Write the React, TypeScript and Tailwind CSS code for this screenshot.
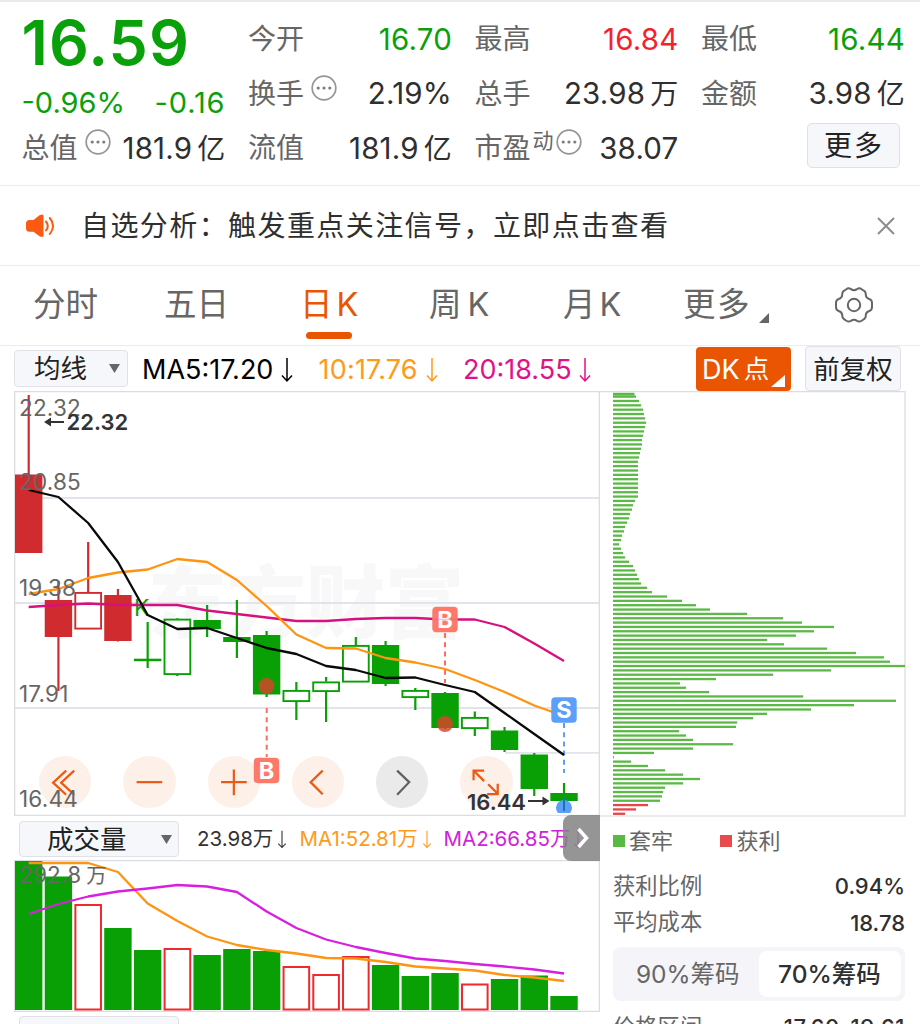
import type { ReactNode } from "react";

type Candle = {
  color: "red" | "green";
  hollow?: boolean;
  top: number;
  bottom: number;
  high: number;
  low: number;
};

const STEP = 29.74;
const FIRST_X = 28.7;

const CANDLES: Candle[] = [
  { color: "red", top: 474.5, bottom: 553, high: 395, low: 553 },
  { color: "red", top: 600, bottom: 637, high: 581, low: 691 },
  { color: "red", hollow: true, top: 592, bottom: 629.5, high: 542, low: 592 },
  { color: "red", top: 595, bottom: 641, high: 589, low: 641.5 },
  { color: "green", top: 658.7, bottom: 661.2, high: 622, low: 668 },
  { color: "green", hollow: true, top: 618.7, bottom: 675, high: 618, low: 676 },
  { color: "green", top: 620, bottom: 629, high: 605, low: 637 },
  { color: "green", top: 637, bottom: 642, high: 600, low: 658 },
  { color: "green", top: 635, bottom: 694.5, high: 631, low: 697 },
  { color: "green", hollow: true, top: 690, bottom: 702, high: 682, low: 720 },
  { color: "green", hollow: true, top: 681.5, bottom: 692, high: 677, low: 722 },
  { color: "green", hollow: true, top: 645, bottom: 682.5, high: 637, low: 682 },
  { color: "green", top: 645, bottom: 684, high: 641, low: 686 },
  { color: "green", hollow: true, top: 690, bottom: 698, high: 688, low: 710 },
  { color: "green", top: 693, bottom: 728, high: 692, low: 729 },
  { color: "green", hollow: true, top: 717, bottom: 729, high: 711.5, low: 736 },
  { color: "green", top: 730.5, bottom: 750, high: 727, low: 752 },
  { color: "green", top: 754.5, bottom: 789, high: 753, low: 796 },
  { color: "green", top: 793, bottom: 801, high: 783, low: 811 },
];

const MA5 = [490, 497, 523, 562, 615, 629, 628, 638, 648, 654, 666, 670, 678, 677.5, 685, 692, 713, 734, 755];
const MA10 = [594, 589, 578, 572.5, 569.5, 559, 562, 580, 606, 634.5, 648, 648.5, 658, 662.5, 669, 680, 692, 705.5, 716];
const MA20 = [607, 605, 603.5, 605, 605, 605, 610.5, 614, 617.5, 621, 621, 619, 618, 618, 619.5, 619.5, 627, 643.5, 661];

const VOLUMES = [861, 876.5, 904, 928, 950, 948, 955, 949, 951, 966, 974, 956, 965, 976, 973, 983.5, 979, 975.5, 996];
const RISING = [2, 5, 9, 10, 11, 15];
const VOL_MA1 = [863, 863, 863, 872, 903.5, 921, 936.5, 945, 950, 953.5, 958, 958.5, 962, 966.5, 968.5, 970.5, 975, 977.5, 981];
const VOL_MA2 = [914, 904, 896.5, 891.5, 888.5, 885, 886.5, 892, 911.5, 928, 939.5, 947, 953, 958.5, 961, 964, 966.5, 969.5, 973.5];

const CHIPS = [
  23, 26, 28, 30, 31, 32, 33, 32, 31, 30, 29, 29, 28, 27, 26, 25, 25, 25, 25, 25, 25, 25, 25, 25, 22, 20, 19, 17, 16,
  14, 12, 11, 9, 8, 6, 8, 10, 12, 16, 20, 22, 24, 26, 28, 34, 39, 54, 69, 83, 97, 134, 170, 189, 221, 201, 183, 154,
  171, 214, 243, 271, 277, 292, 218, 160, 103, 67, 73, 96, 190, 283, 241, 198, 154, 140, 124, 123, 66, 73, 80, 120, 80,
  41, 1, 18, 35, 52, 70, 87, 70, 52, 50, 49, 47, 35, 23, 12,
];
const PROFIT_FROM = 94;

const AXIS = [
  { label: "22.32", y: 416 },
  { label: "20.85", y: 490 },
  { label: "19.38", y: 595.5 },
  { label: "17.91", y: 701.5 },
  { label: "16.44", y: 806.5 },
];

const xAt = (i: number) => FIRST_X + i * STEP;
const toPoints = (ys: number[]) => ys.map((y, i) => `${xAt(i)},${y}`).join(" ");

function MoreDots() {
  return (
    <svg className="h-[26px] w-[26px] shrink-0" viewBox="0 0 26 26" fill="none">
      <circle cx="13" cy="13" r="11.8" stroke="#959595" strokeWidth="1.7" />
      <g fill="#7d7d7d">
        <circle cx="7.2" cy="13" r="1.6" />
        <circle cx="13" cy="13" r="1.6" />
        <circle cx="18.8" cy="13" r="1.6" />
      </g>
    </svg>
  );
}

function Cell({ label, value, extra, tone = "text-[#2f2f2f]" }: { label: string; value: ReactNode; extra?: ReactNode; tone?: string }) {
  return (
    <div className="flex h-[54.5px] items-center whitespace-nowrap">
      <span className="text-[28px] text-[#666]">{label}</span>
      {extra}
      <span className={`ml-auto text-[29.5px] tracking-[0.2px] ${tone}`}>{value}</span>
    </div>
  );
}

function Unit({ children }: { children: string }) {
  return <span className="ml-[5px] text-[28px]">{children}</span>;
}

function DownArrow({ className }: { className: string }) {
  return (
    <svg className={className} viewBox="0 0 12 26" fill="none" stroke="currentColor" strokeWidth="1.5">
      <path d="M6 1v23M1 18.500l5 5.500 5-5.500" />
    </svg>
  );
}

function Quote() {
  return (
    <section className="flex h-[184px] gap-[22.5px] border-b border-[#ececec] pl-[21.5px] pt-[10px]">
      <div className="w-[204px]">
        <div className="flex h-[61px] items-center text-[62.5px] font-semibold leading-none tracking-[1.1px] text-[#0aa00a]">
          16.59
        </div>
        <div className="flex h-[48px] items-center justify-between pt-[10px] text-[29px] text-[#0aa00a]">
          <span>-0.96%</span>
          <span className="tracking-[0.9px]">-0.16</span>
        </div>
        <Cell
          label="总值"
          extra={<span className="mb-3 ml-[7px]"><MoreDots /></span>}
          value={<>181.9<Unit>亿</Unit></>}
        />
      </div>
      <div className="w-[204px]">
        <Cell label="今开" value="16.70" tone="text-[#0aa00a]" />
        <Cell label="换手" value="2.19%" extra={<span className="mb-3 ml-[7px]"><MoreDots /></span>} />
        <Cell label="流值" value={<>181.9<Unit>亿</Unit></>} />
      </div>
      <div className="w-[204px]">
        <Cell label="最高" value="16.84" tone="text-[#f5222d]" />
        <Cell label="总手" value={<>23.98<Unit>万</Unit></>} />
        <Cell
          label="市盈"
          value="38.07"
          extra={
            <span className="mb-4 ml-[2px] flex items-center text-[21px] text-[#666]">
              动
              <span className="ml-[2px] mt-1"><MoreDots /></span>
            </span>
          }
        />
      </div>
      <div className="w-[204px]">
        <Cell label="最低" value="16.44" tone="text-[#0aa00a]" />
        <Cell label="金额" value={<>3.98<Unit>亿</Unit></>} />
        <button className="ml-auto mr-[5.5px] mt-[2px] flex h-[45px] w-[93px] items-center justify-center rounded-[5px] border-[1.5px] border-[#dfe1e6] bg-[#f6f7fb] pl-[2px] text-[28px] tracking-[2px] text-[#222]">
          更多
        </button>
      </div>
    </section>
  );
}

function Notice() {
  return (
    <section className="flex h-[80px] items-center border-b border-[#ececec] pl-[25px] pr-[25px]">
      <svg className="h-[26px] w-[31px]" viewBox="0 0 31 26" fill="none">
        <path d="M4.500 7h4L14.500 2.300Q18.500 .2 18.500 3v19.500q0 2.500-4 .8L8.500 18.800h-4Q1 18.800 1 15.300V10.500Q1 7 4.500 7Z" fill="#fc5a12" />
        <path d="M21 8.500q3.600 4.400 0 9M24.800 5q6.500 7.800 0 16" stroke="#fc5a12" strokeWidth="2" strokeLinecap="round" />
      </svg>
      <p lang="zh-CN" className="ml-[25px] mt-px whitespace-nowrap text-[28px] tracking-[1.42px] text-[#2f2f2f]">
        自选分析：触发重点关注信号，立即点击查看
      </p>
      <svg className="ml-auto h-[18px] w-[18px]" viewBox="0 0 18 18" stroke="#8c8c8c" strokeWidth="2">
        <path d="M1 1l16 16M17 1L1 17" />
      </svg>
    </section>
  );
}

function Tabs() {
  const base = "flex items-center whitespace-nowrap";
  return (
    <nav className="flex h-[80px] border-b border-[#ececec] pl-[33px] text-[32.5px] text-[#666]">
      <div className={`${base} w-[131px]`}>分时</div>
      <div className={`${base} w-[136px]`}>五日</div>
      <div className={`${base} relative w-[129px] text-[#ea5504]`}>
        日<span className="ml-1">K</span>
        <span className="absolute bottom-[6px] left-[6px] h-[7px] w-[46px] rounded-full bg-[#ea5504]" />
      </div>
      <div className={`${base} w-[134px]`}>周<span className="ml-[6px]">K</span></div>
      <div className={`${base} w-[120px]`}>月<span className="ml-1">K</span></div>
      <div className={`${base} w-[152px] tracking-[1.5px]`}>
        更多
        <svg className="ml-[8px] mt-6 h-[10px] w-[10px]" viewBox="0 0 10 10" fill="#666">
          <path d="M10 0v10H0z" />
        </svg>
      </div>
      <svg className="mt-[21px] h-[36px] w-[38px]" viewBox="0 0 38 36" fill="none" stroke="#666" strokeWidth="2">
        <path
          d="M11 2.500C13 .8 14.500 1 16 2.200q3 2 6 0C23.500 1 25 .8 27 2.500l2.500 1.600C31 5.200 30.800 6.500 30.800 8q.2 3 3.500 4 2.700.7 2.700 4v4q0 3.300-2.700 4-3.300 1-3.500 4 0 1.500-.3 2.500-.8 1.400-3.500 3C25 34.900 23.500 35 22 33.800q-3-2-6 0c-1.500 1.200-3 1.100-5-.3-2.700-1.600-3.500-2.500-3.500-3.500L7.200 28q-.2-3-3.500-4Q1 23.300 1 20v-4q0-3.300 2.700-4 3.300-1 3.500-4C7.200 6.500 7 5.200 8.500 4.100Z"
          strokeLinejoin="round"
        />
        <circle cx="19" cy="18" r="6.200" />
      </svg>
    </nav>
  );
}

function Toolbar() {
  return (
    <div className="flex h-[45px] items-center whitespace-nowrap pl-[14px] pr-[19px] text-[27px]">
      <button className="flex h-[37px] w-[114px] items-center rounded-[4px] border-[1.5px] border-[#dfe1e6] bg-[#f6f7fb] pl-[19px] text-[26.5px] text-[#222]">
        均线
        <svg className="ml-[22px] h-[9px] w-[11px]" viewBox="0 0 11 9" fill="#666">
          <path d="M0 0h11L5.500 9z" />
        </svg>
      </button>
      <span className="ml-[14px] mt-[2px] flex w-[176.500px] items-center text-black">
        MA5:17.20
        <DownArrow className="ml-[8px] h-[26px] w-[12px]" />
      </span>
      <span className="mt-[2px] flex w-[144.500px] items-center text-[#ff9a1a]">
        <span className="tracking-[0.2px]">10:17.76</span>
        <DownArrow className="ml-[8px] h-[26px] w-[12px]" />
      </span>
      <span className="mt-[2px] flex items-center text-[#e0128a]">
        20:18.55
        <DownArrow className="ml-[7px] h-[26px] w-[12px]" />
      </span>
      <button className="relative ml-auto flex h-[44px] w-[95px] items-center rounded-[4px] bg-[#ea5504] pl-[6px] pt-px text-[27px] text-white">
        DK<span className="ml-1 text-[25.500px]">点</span>
        <svg className="absolute bottom-[4px] right-[6px] h-[12px] w-[14px]" viewBox="0 0 14 12" fill="#fff">
          <path d="M14 0v12H0z" />
        </svg>
      </button>
      <button className="ml-[14px] flex h-[45px] w-[96px] items-center justify-center rounded-[4px] border-[1.5px] border-[#dfe1e6] bg-[#f6f7fb] pt-px text-[26.5px] text-[#222]">
        前复权
      </button>
    </div>
  );
}

function Marker({ x, y, text, fill }: { x: number; y: number; text: string; fill: string }) {
  return (
    <g>
      <rect x={x - 12.7} y={y - 12.700} width="25.400" height="25.400" rx="4" fill={fill} />
      <text x={x} y={y + 8.3} textAnchor="middle" fontSize="23.500" fontWeight="700" fill="#fff">
        {text}
      </text>
    </g>
  );
}

function KLineChart() {
  return (
    <svg className="block h-[425px] w-[586px]" viewBox="14 391 586 425" fill="none">
      <text x="148" y="632" fontSize="79" fontWeight="900" fill="#f8f8f9">
        东方财富
      </text>
      <g stroke="#e3e3ec" strokeWidth="1.800">
        <path d="M15 498h584M15 603h584M15 708h584M505 752.800h94" />
      </g>
      <path d="M14.700 391v425M14 391.500h586M599.300 391v425M14 815.400h586" stroke="#dcdde1" strokeWidth="1.300" />
      <text x="134" y="616" fontSize="23" fill="#0aa00a">
        K
      </text>
      {CANDLES.map((c, i) => {
        const x = xAt(i);
        const color = c.color === "red" ? "#d02c2f" : "#08a005";
        return (
          <g key={i}>
            <path
              d={c.hollow ? `M${x} ${c.high}V${c.top}M${x} ${c.bottom}V${Math.max(c.low, c.bottom)}` : `M${x} ${c.high}V${c.low}`}
              stroke={color}
              strokeWidth="2.200"
            />
            {c.hollow ? (
              <rect x={x - 12.900} y={c.top + 0.900} width="25.800" height={c.bottom - c.top - 1.800} stroke={color} strokeWidth="1.900" />
            ) : (
              <rect x={x - 13.700} y={c.top} width="27.400" height={c.bottom - c.top} fill={color} />
            )}
          </g>
        );
      })}
      <circle cx="266.500" cy="686" r="8" fill="#d9432a" fillOpacity="0.820" />
      <circle cx="445" cy="724" r="8" fill="#d9432a" fillOpacity="0.820" />
      <path d="M557.800 813A8 8 0 1 1 570.200 813Z" fill="#5b9ff8" />
      <path d="M564 798v13" stroke="#1878a8" strokeWidth="2" />

      <g strokeWidth="2">
        <path d="M266.700 708v49M445 633v50" stroke="#ff6b5c" strokeDasharray="5 4.200" />
        <path d="M564 723v50" stroke="#5b9ff8" strokeDasharray="5 4.200" />
      </g>
      <g strokeWidth="2.300" strokeLinejoin="round">
        <polyline points={toPoints(MA20)} stroke="#d8107f" />
        <polyline points={toPoints(MA10)} stroke="#ff9410" />
        <polyline points={toPoints(MA5)} stroke="#0a0a0a" />
      </g>
      <Marker x={445} y={619.500} text="B" fill="#fd7a6b" />
      <Marker x={564} y={710} text="S" fill="#5b9ff8" />
      <path d="M433 619.500h24" stroke="#e8509a" strokeWidth="1.500" opacity="0.350" />
    </svg>
  );
}

// Drawn above the round controls
function ChartOverlay() {
  return (
    <svg className="pointer-events-none absolute left-0 top-0 h-[425px] w-[586px]" viewBox="14 391 586 425">
      <g fontSize="22.500" fill="#666" letterSpacing="0.2">
        {AXIS.map((a) => (
          <text key={a.label} x="19" y={a.y}>
            {a.label}
          </text>
        ))}
      </g>
      <Marker x={266.500} y={770.500} text="B" fill="#fd7a6b" />
      <g fontSize="22" fontWeight="600" fill="#333">
        <text x="66.500" y="430">22.32</text>
        <text x="467" y="809.500">16.44</text>
      </g>
      <g stroke="#333" strokeWidth="2">
        <path d="M48 422h16M528 801h16" />
      </g>
      <path d="M44 422l7-4.500v9zM549.500 801l-7-4.500v9z" fill="#333" />
    </svg>
  );
}

const CONTROLS = [
  { name: "first", path: "M27 14.500L14 26.500l13 12M35 14.500l-13 12 13 12", muted: false },
  { name: "zoom-out", path: "M13.500 26h25.500", muted: false },
  { name: "zoom-in", path: "M13 26h25.500M25.700 13.500v25.500", muted: false },
  { name: "prev", path: "M30.500 14.500L18.500 26l12 12", muted: false },
  { name: "next", path: "M21 14.500L33 26 21 38.500", muted: true },
  { name: "expand", path: "M13.500 24v-9.500H24M13.500 14.500L24 25M28 28l9.500 9.500M27 38h10.500V27.500", muted: false },
];

function Controls() {
  return (
    <div className="absolute left-[25px] top-[364.5px] flex gap-[32px]">
      {CONTROLS.map((c) => (
        <button
          key={c.name}
          aria-label={c.name}
          className={`h-[52.300px] w-[52.300px] rounded-full ${c.muted ? "bg-[#e6e6e6]/85" : "bg-[#fcece2]/80"}`}
        >
          <svg viewBox="0 0 52 52" fill="none" stroke={c.muted ? "#5f5f5f" : "#ea5a14"} strokeWidth="2.200">
            <path d={c.path} />
          </svg>
        </button>
      ))}
    </div>
  );
}

function VolumeHeader() {
  return (
    <div className="relative flex h-[44px] items-center whitespace-nowrap pl-[5px] pt-[2px] text-[20.500px]">
      <button className="flex h-[36px] w-[160px] items-center rounded-[4px] border-[1.5px] border-[#dfe1e6] bg-[#f6f7fb] pl-[27px] text-[26.500px] text-[#222]">
        成交量
        <svg className="ml-[34px] h-[9px] w-[11px]" viewBox="0 0 11 9" fill="#666">
          <path d="M0 0h11L5.500 9z" />
        </svg>
      </button>
      <span className="ml-[18px] flex w-[102.5px] items-center text-[#333]">
        23.98万<DownArrow className="ml-[4px] h-[19px] w-[10px]" />
      </span>
      <span className="flex w-[144px] items-center text-[#ff9a1a]">
        MA1:52.81万<DownArrow className="ml-[4px] h-[19px] w-[10px]" />
      </span>
      <span className="flex items-center text-[#cf22dc]">
        MA2:66.85万<DownArrow className="ml-[3px] h-[19px] w-[10px]" />
      </span>
      <button className="absolute right-0 top-[-1px] flex h-[46px] w-[37px] items-center justify-center rounded-l-lg bg-[#828282]/85" aria-label="more">
        <svg className="ml-[3px] h-[22px] w-[12px]" viewBox="0 0 12 22" fill="none" stroke="#fff" strokeWidth="3.500">
          <path d="M1.500 2l8 9-8 9" />
        </svg>
      </button>
    </div>
  );
}

function VolumeChart() {
  return (
    <svg className="block h-[152px] w-[586px]" viewBox="14 860 586 152" fill="none">
      <path d="M14.700 860v151M14 860.500h586M599.300 860v151M14 1011.300h586" stroke="#dcdde1" strokeWidth="1.300" />
      {VOLUMES.map((top, i) =>
        RISING.includes(i) ? (
          <rect key={i} x={xAt(i) - 12.800} y={top + 1} width="25.600" height={1008.500 - top} stroke="#ee2a30" strokeWidth="2" />
        ) : (
          <rect key={i} x={xAt(i) - 13.700} y={top} width="27.400" height={1010 - top} fill="#08a005" />
        )
      )}
      <g strokeWidth="2.300" strokeLinejoin="round">
        <polyline points={toPoints(VOL_MA1)} stroke="#ff9410" />
        <polyline points={toPoints(VOL_MA2)} stroke="#d81fe0" />
      </g>
      <text x="19" y="883" fontSize="22.500" fill="#666" letterSpacing="0.2">
        292.8<tspan dx="5" fontSize="20.500">万</tspan>
      </text>
    </svg>
  );
}

function ChipChart() {
  return (
    <svg className="block h-[426px] w-[306px]" viewBox="600 391 306 426" fill="none">
      <path d="M600 391.500h306" stroke="#dcdde1" strokeWidth="1.300" />
      <path d="M905 391v425.500M600 816h306" stroke="#e4e5e8" strokeWidth="1.700" />
      <rect x="613" y="392.800" width="21.500" height="2.800" fill="#5cb947" />
      {CHIPS.map((w, i) => (
        <rect key={i} x="613" y={395.500 + i * 4.345} width={w} height="2.300" fill={i < PROFIT_FROM ? "#5cb947" : "#e4474b"} />
      ))}
    </svg>
  );
}

function ChipPanel() {
  return (
    <div className="pl-[13px] pr-[1px] text-[22px] text-[#666]">
      <div className="mt-[7px] flex h-[33px] items-center">
        <span className="mr-[4px] h-[12px] w-[12px] bg-[#58b944]" />
        套牢
        <span className="ml-[46.5px] mr-[5px] h-[12px] w-[12px] bg-[#e84a4d]" />
        获利
      </div>
      <div className="mt-[11px] flex h-[36px] items-center justify-between">
        <span className="text-[22.300px]">获利比例</span>
        <span className="font-medium text-[#2f2f2f]">0.94%</span>
      </div>
      <div className="flex h-[37px] items-center justify-between">
        <span className="text-[22.300px]">平均成本</span>
        <span className="font-medium text-[#2f2f2f]">18.78</span>
      </div>
      <div className="mt-[6px] flex h-[54px] rounded-lg bg-[#f5f5f9] p-1 pr-[4.500px] text-[24.500px]">
        <span className="flex flex-1 items-center justify-center">90%筹码</span>
        <span className="flex w-[142px] items-center justify-center rounded-lg bg-white font-medium text-[#2f2f2f]">
          70%筹码
        </span>
      </div>
      <div className="mt-[8px] flex h-[36px] items-center justify-between whitespace-nowrap">
        <span className="text-[22.300px]">价格区间</span>
        <span className="font-medium tracking-[0.6px] text-[#2f2f2f]">17.60-19.61</span>
      </div>
    </div>
  );
}

export default function App() {
  return (
    <main lang="zh-CN" className="h-[1024px] w-[920px] overflow-hidden bg-white font-['Inter','Noto_Sans_CJK_SC',sans-serif] leading-none">
      <div className="h-[2px] bg-[#ebebeb]" />
      <Quote />
      <Notice />
      <Tabs />
      <Toolbar />
      <div className="flex">
        <div className="ml-[14px] w-[586px]">
          <div className="relative">
            <KLineChart />
            <Controls />
            <ChartOverlay />
          </div>
          <VolumeHeader />
          <VolumeChart />
          <div className="ml-[5px] mt-[4px] h-[36px] w-[160px] rounded-[4px] border-[1.5px] border-[#dfe1e6] bg-[#f6f7fb]" />
        </div>
        <div className="w-[306px]">
          <ChipChart />
          <ChipPanel />
        </div>
      </div>
    </main>
  );
}
